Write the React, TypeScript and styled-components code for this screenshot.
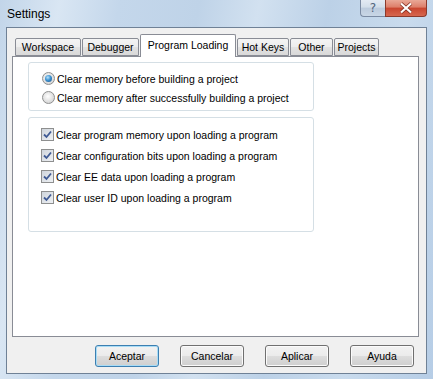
import styled, { createGlobalStyle } from 'styled-components'

const Global = createGlobalStyle`
  html, body {
    margin: 0;
    padding: 0;
    width: 433px;
    height: 379px;
    overflow: hidden;
  }
  body {
    font-family: 'Liberation Sans', Arial, sans-serif;
    font-size: 10.5px;
    color: #000;
  }
`

const Window = styled.div`
  width: 433px;
  height: 379px;
  box-sizing: border-box;
  padding: 0 6px 5px 6px;
  display: flex;
  flex-direction: column;
  background: linear-gradient(
    100deg,
    #c2d5e9 0%,
    #d9e6f3 12%,
    #c4d7eb 24%,
    #bfd3e8 40%,
    #d2e1f0 52%,
    #bcd1e7 66%,
    #c9dbed 82%,
    #b6cde6 100%
  );
`

const TitleBar = styled.div`
  height: 27px;
  flex: none;
  display: flex;
  justify-content: space-between;
  align-items: flex-start;
`

const Title = styled.div`
  font-family: 'Liberation Sans', Arial, sans-serif;
  font-size: 12px;
  margin: 7px 0 0 1px;
  color: #000;
`

const Caption = styled.div`
  display: flex;
`

const HelpBtn = styled.div`
  width: 25px;
  height: 17px;
  box-sizing: border-box;
  border: 1px solid #7b8ba3;
  border-top: none;
  border-right: none;
  border-radius: 0 0 0 4px;
  background: linear-gradient(#e3eaf3, #d3deea 45%, #bccbdd 50%, #c9d7e6);
  display: flex;
  align-items: center;
  justify-content: center;
  font-family: 'DejaVu Sans', sans-serif;
  font-size: 12px;
  color: #52637d;
`

const CloseBtn = styled.div`
  width: 42px;
  height: 17px;
  box-sizing: border-box;
  border: 1px solid #8b3a2c;
  border-top: none;
  border-radius: 0 0 4px 0;
  background: linear-gradient(#e9a897, #dd7e69 45%, #c9452f 50%, #d6674f);
  display: flex;
  align-items: center;
  justify-content: center;
`

const Client = styled.div`
  flex: 1;
  display: flex;
  flex-direction: column;
  background: #f0f0f0;
  border: 1px solid #6f8196;
  padding: 5px 7px 6px 5px;
`

const TabStrip = styled.div`
  height: 23px;
  flex: none;
  display: flex;
  align-items: flex-end;
  padding-left: 3px;
  position: relative;
  z-index: 1;
`

const Tab = styled.div<{ $w: number; $active?: boolean }>`
  width: ${(p) => p.$w}px;
  box-sizing: border-box;
  height: ${(p) => (p.$active ? 23 : 18)}px;
  margin-bottom: ${(p) => (p.$active ? -1 : 0)}px;
  margin-right: 1px;
  border: 1px solid #898c95;
  border-bottom: ${(p) => (p.$active ? 'none' : '1px solid #898c95')};
  border-radius: 2px 2px 0 0;
  background: ${(p) =>
    p.$active
      ? '#fff'
      : 'linear-gradient(#f4f4f4, #ededed 50%, #e2e2e2 52%, #d9d9d9)'};
  display: flex;
  justify-content: center;
  align-items: center;
  padding-bottom: ${(p) => (p.$active ? 3 : 0)}px;
  white-space: nowrap;
`

const Panel = styled.div`
  height: 281px;
  flex: none;
  box-sizing: border-box;
  border: 1px solid #898c95;
  background: #fff;
  padding: 5px 0 0 15px;
  display: flex;
  flex-direction: column;
  gap: 6px;
`

const Group = styled.div<{ $h: number; $pad: number }>`
  width: 286px;
  height: ${(p) => p.$h}px;
  box-sizing: border-box;
  border: 1px solid #d5dfe5;
  border-radius: 3px;
  padding: 6px 0 0 ${(p) => p.$pad}px;
  display: flex;
  flex-direction: column;
`

const Row = styled.div<{ $h: number }>`
  height: ${(p) => p.$h}px;
  display: flex;
  align-items: center;
  gap: 2px;
  white-space: nowrap;
`

const Radio = styled.span<{ $on?: boolean }>`
  width: 13px;
  height: 13px;
  box-sizing: border-box;
  border-radius: 50%;
  border: 1px solid #8e8f8f;
  background: radial-gradient(circle at 45% 40%, #ffffff 0%, #e6e6e6 45%, #c9c9c9 100%);
  display: flex;
  align-items: center;
  justify-content: center;
  flex: none;
  &::after {
    content: '';
    display: ${(p) => (p.$on ? 'block' : 'none')};
    width: 7px;
    height: 7px;
    border-radius: 50%;
    background: radial-gradient(circle at 40% 35%, #b9e3fb 0%, #3d93d1 45%, #184f85 100%);
  }
`

const Check = styled.span`
  width: 13px;
  height: 13px;
  box-sizing: border-box;
  border: 1px solid #8e8f8f;
  background: linear-gradient(135deg, #cfd5dc, #eef0f3);
  display: flex;
  align-items: center;
  justify-content: center;
  flex: none;
`

const ButtonRow = styled.div`
  margin-top: 8px;
  display: flex;
  justify-content: flex-end;
  gap: 21px;
  padding-right: 5px;
`

const Button = styled.button<{ $def?: boolean }>`
  width: 64px;
  height: 22px;
  box-sizing: border-box;
  border: 1px solid ${(p) => (p.$def ? '#3c7fb1' : '#707070')};
  border-radius: 3px;
  background: linear-gradient(#f2f2f2, #ebebeb 50%, #dddddd 50%, #cfcfcf);
  box-shadow: ${(p) => (p.$def ? 'inset 0 0 0 1px #a8dcf6' : 'inset 0 0 0 1px #fbfbfb')};
  font-family: 'Liberation Sans', Arial, sans-serif;
  font-size: 10.5px;
  color: #000;
  padding: 0;
`

const tabs = [
  { label: 'Workspace', w: 66 },
  { label: 'Debugger', w: 57 },
  { label: 'Program Loading', w: 96, active: true },
  { label: 'Hot Keys', w: 52 },
  { label: 'Other', w: 43 },
  { label: 'Projects', w: 45 },
]

const checks = [
  'Clear program memory upon loading a program',
  'Clear configuration bits upon loading a program',
  'Clear EE data upon loading a program',
  'Clear user ID upon loading a program',
]

function CheckMark() {
  return (
    <svg width="9" height="9" viewBox="0 0 9 9">
      <path d="M1 4.5 L3.5 7 L8 1.5" fill="none" stroke="#3f5a94" strokeWidth="1.8" />
    </svg>
  )
}

export default function App() {
  return (
    <Window>
      <Global />
      <TitleBar>
        <Title>Settings</Title>
        <Caption>
          <HelpBtn>?</HelpBtn>
          <CloseBtn>
            <svg width="16" height="12" viewBox="0 0 16 12">
              <path d="M3 1.5 L13 10.5 M13 1.5 L3 10.5" stroke="#7a2a1d" strokeWidth="3.6" />
              <path d="M3 1.5 L13 10.5 M13 1.5 L3 10.5" stroke="#fff" strokeWidth="2.2" />
            </svg>
          </CloseBtn>
        </Caption>
      </TitleBar>
      <Client>
        <TabStrip>
          {tabs.map((t) => (
            <Tab key={t.label} $w={t.w} $active={t.active}>
              {t.label}
            </Tab>
          ))}
        </TabStrip>
        <Panel>
          <Group $h={49} $pad={13}>
            <Row $h={19}>
              <Radio $on />
              Clear memory before building a project
            </Row>
            <Row $h={19}>
              <Radio />
              Clear memory after successfully building a project
            </Row>
          </Group>
          <Group $h={115} $pad={12}>
            {checks.map((c) => (
              <Row key={c} $h={21}>
                <Check>
                  <CheckMark />
                </Check>
                {c}
              </Row>
            ))}
          </Group>
        </Panel>
        <ButtonRow>
          <Button $def>Aceptar</Button>
          <Button>Cancelar</Button>
          <Button>Aplicar</Button>
          <Button>Ayuda</Button>
        </ButtonRow>
      </Client>
    </Window>
  )
}
